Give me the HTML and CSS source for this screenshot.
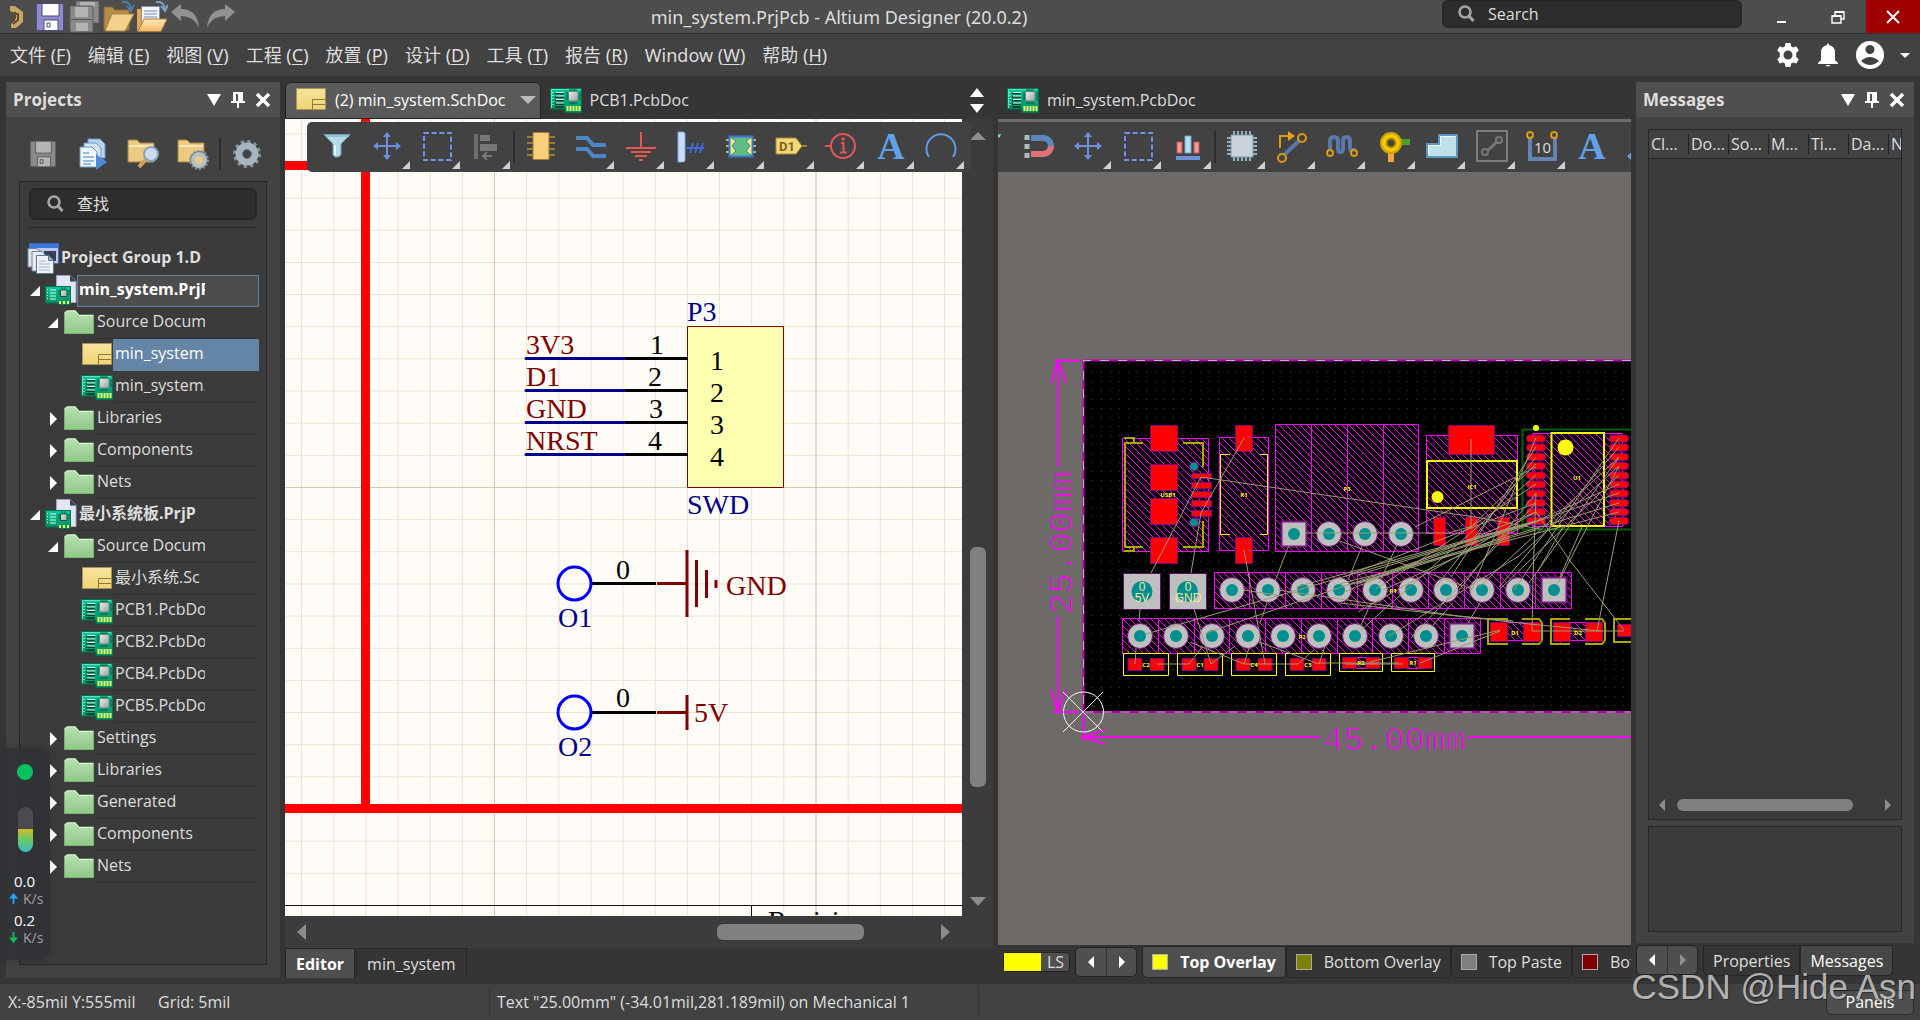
FILE: index.html
```html
<!DOCTYPE html>
<html lang="zh-CN">
<head>
  <meta charset="UTF-8">
  <meta name="viewport" content="width=device-width, initial-scale=1.0">
  <title>min_system.PrjPcb - Altium Designer (20.0.2)</title>
  <link rel="stylesheet" href="styles.css">
</head>
<body>
  <!-- shared icons -->
  <svg class="sprite" aria-hidden="true">
    <defs>
      <linearGradient id="gFolder" x1="0" y1="0" x2="0" y2="1"><stop offset="0" stop-color="#b9e0b4"/><stop offset="1" stop-color="#8fcb86"/></linearGradient>
      <linearGradient id="gSheet" x1="0" y1="0" x2="0" y2="1"><stop offset="0" stop-color="#f6e3a0"/><stop offset="1" stop-color="#f0d572"/></linearGradient>
      <linearGradient id="gBoard" x1="0" y1="0" x2="0" y2="1"><stop offset="0" stop-color="#00c99b"/><stop offset="1" stop-color="#008a5c"/></linearGradient>
      <linearGradient id="gChip" x1="0" y1="0" x2="1" y2="1"><stop offset="0" stop-color="#eee"/><stop offset="1" stop-color="#9aa39f"/></linearGradient>
      <linearGradient id="gOpen" x1="0" y1="0" x2="0" y2="1"><stop offset="0" stop-color="#ffe9bd"/><stop offset="1" stop-color="#efb764"/></linearGradient>

      <symbol id="folder" viewBox="0 0 32 32"><path d="M1.500 26.500V5l3-1.500h8L16 8h14.500v18.500z" fill="url(#gFolder)" stroke="#7fb078"/><path d="M2 6l3-2h7l4 4.500h14" fill="none" stroke="#e0f5dc"/></symbol>
      <symbol id="sheet" viewBox="0 0 32 32"><path d="M1.500 4.500h29v21h-29z" fill="url(#gSheet)" stroke="#a8915a"/><path d="M30 15.500H17.500V25M17.500 20.500H30" fill="none" stroke="#8d7845"/></symbol>
      <symbol id="board" viewBox="0 0 32 32">
        <path d="M.5 4.500h31v24H15v-3.500H.5z" fill="url(#gBoard)" stroke="#04724f"/>
        <path d="M1.500 24V5.500H30" fill="none" stroke="#5ee3bd"/>
        <path d="M5 9.500h9M5 13h9M5 16.500h9M5 20h9M5 23h9" stroke="#06482f" stroke-width="2"/>
        <path d="M6 8.500h8M6 12h8M6 15.500h8M6 19h8" stroke="#e6fff6"/>
        <path d="M3 8v13" stroke="#fff" stroke-dasharray="1 2"/>
        <path d="M20 5v2M22 5v2M24 5v2M26 5v2M20 18v2M22 18v2M24 18v2M26 18v2M16 9h2M16 11h2M16 13h2M16 15h2M29 9h2M29 11h2M29 13h2M29 15h2" stroke="#075639"/>
        <path d="M18.500 7.500h9.500v9.500h-9.500z" fill="url(#gChip)" stroke="#5d8878"/>
        <path d="M17.500 22v5M20.500 22v5M23.500 22v5M26.500 22v5M29.500 22v5" stroke="#e6ff6a" stroke-width="2"/>
      </symbol>
      <symbol id="project" viewBox="0 0 32 32">
        <path d="M11.500.5H25l6 6v21H11.500z" fill="#e3e6f2" stroke="#9fa6c4"/><path d="M25 .5l6 6h-6z" fill="#333a55"/>
        <path d="M.5 11.500h25v18H14V28H.5z" fill="url(#gBoard)" stroke="#04724f"/>
        <path d="M5 15h6M5 18h6M5 21h6M5 24h6" stroke="#e6fff6"/><path d="M2.500 14v11" stroke="#fff" stroke-dasharray="1 2"/>
        <path d="M15.500 15h6.500v6.500h-6.500z" fill="url(#gChip)" stroke="#075639"/><path d="M13 16h2M13 19h2M23 16h2M23 19h2M17 12v2M20 12v2" stroke="#075639"/>
        <path d="M15 26v3M19 26v3M23 26v3" stroke="#e6ff6a" stroke-width="2"/>
      </symbol>
      <symbol id="group" viewBox="0 0 32 32">
        <path d="M2.500.5h29v20h-29z" fill="#b9c9ea" stroke="#3b69c4"/><path d="M3 1h28v4H3z" fill="#3f76dc"/><path d="M17 8h12v10H17z" fill="#364159"/>
        <path d="M1 5.500h9l3 3V24H1z" fill="#dfe5ee" stroke="#76829b"/><path d="M5 8.500h10l3 3V28H5z" fill="#e7ecf3" stroke="#76829b"/>
        <path d="M9.500 12.500h12l5 5v13h-17z" fill="#eef2f8" stroke="#61759a"/><path d="M21.500 12.500v5h5" fill="#9fb2cf" stroke="#61759a"/><path d="M12 18h7M12 21h11M12 24h11M12 27h11" stroke="#a9b5c9"/>
      </symbol>
      <symbol id="save" viewBox="0 0 32 32"><path class="disk" d="M2.500 2.500h27v27h-27z"/><path class="disk-paper" d="M8 3h17v12H8zM10 19h14v10H10z"/><path class="disk-line" d="M8 3v12h17V3M10 29V19h14v10M13 22h3v4h-3z"/></symbol>
      <symbol id="lens" viewBox="0 0 20 20"><circle cx="9" cy="8" r="5.500" fill="none" stroke="#a5a5a5" stroke-width="2.600"/><path d="M13 12l4.500 5" stroke="#a5a5a5" stroke-width="3"/></symbol>
      <symbol id="pin" viewBox="0 0 14 18"><path d="M2 1h10v9h2v2H8v5H6v-5H0v-2h2z" fill="#fff"/><path d="M5 3h2v7H5z" fill="#4f4f4f"/></symbol>
      <symbol id="cross" viewBox="0 0 16 16"><path d="M2 2l12 12M14 2L2 14" stroke="#fff" stroke-width="3.400"/></symbol>
      <symbol id="gear" viewBox="0 0 32 32"><circle cx="16" cy="16" r="12.500" fill="none" stroke="#8797a1" stroke-width="3" stroke-dasharray="3.270 3.270"/><circle cx="16" cy="16" r="8" fill="none" stroke="#a7b5be" stroke-width="7"/><circle cx="16" cy="16" r="4.500" fill="none" stroke="#6b7a84"/></symbol>
      <symbol id="filter" viewBox="0 0 32 32"><path d="M3 4.500h26L20 14v11l-3 2h-3l-2-2V14z" fill="#b7dbe2" stroke="#6fa3b8"/><path d="M4 5h24v2H6z" fill="#90c5d8"/><path d="M14 15v10" stroke="#e8f8fb" stroke-width="2"/></symbol>
      <symbol id="move" viewBox="0 0 32 32"><path d="M16 4v24M4 16h24" stroke="#6e8ee0" stroke-width="2"/><path d="M16 2l4 5h-8zM16 30l4-5h-8zM2 16l5-4v8zM30 16l-5-4v8z" fill="#6e8ee0"/></symbol>
      <symbol id="marquee" viewBox="0 0 32 32"><path d="M3 3h27v27H3z" fill="none" stroke="#6e92e6" stroke-width="2" stroke-dasharray="5 2.700"/></symbol>
      <symbol id="letterA" viewBox="0 0 32 32"><text x="16" y="29" text-anchor="middle" class="big-a">A</text></symbol>
      <symbol id="pad" viewBox="-14 -14 28 28"><circle r="12.500" fill="#bfbfbf" stroke="#7a1481"/><circle r="6" fill="#008f8f"/></symbol>
      <symbol id="padSq" viewBox="-14 -14 28 28"><path d="M-12.500-12.500h25v25h-25z" fill="#bfbfbf" stroke="#7a1481" stroke-width="2"/><circle r="6" fill="#008f8f"/></symbol>
    </defs>
  </svg>

  <header class="titlebar">
    <div class="quick">
      <svg class="logo" viewBox="0 0 18 26"><path d="M2 2h5l8 6v10l-7 6H3v-4l4-3V9L2 7z" fill="#c9a663"/><path d="M2 12l5-3v5l-4 3M7 10h3v6l-5 4" fill="none" stroke="#5d4d33" stroke-width="2"/></svg>
      <button class="ico disk-blue" aria-label="Save"><svg><use href="#save"/></svg></button>
      <button class="ico disk-off" aria-label="Save all"><svg viewBox="0 0 32 32"><path class="disk" d="M8 0h23v22H8z"/><path class="disk-paper" d="M12 1h15v5H12z"/><path class="disk" d="M2 5h23v26H2z"/><path class="disk-paper" d="M7 6h13v10H7zM8 22h12v8H8z"/><path d="M3 18.500h21" stroke="#555"/></svg></button>
      <button class="ico" aria-label="Open"><svg viewBox="0 0 32 32"><path d="M2 29V6h8l3 3h14v20z" fill="#b48c48" stroke="#8d6c35"/><path d="M10 13h22l-9 17H3z" fill="#f2d28c" stroke="#a98342"/><path d="M20 1q8-1 9 7m-4-3l4 5 3-6" fill="none" stroke="#4e7fa9" stroke-width="2"/></svg></button>
      <button class="ico" aria-label="Open project"><svg viewBox="0 0 32 32"><path d="M1 30V8h8v22z" fill="#e7a44b"/><path d="M5.500 5.500h18v16h-18z" fill="#f4f6ff" stroke="#8b8fae"/><path d="M8 10h13M8 13h13M8 16h13" stroke="#6f87b6"/><path d="M8 18h23l-6 12.500H2z" fill="url(#gOpen)" stroke="#b07c34"/><path d="M20 1q8-1 9 7m-4-3l4 5 3-6" fill="none" stroke="#7ba3c0" stroke-width="2"/></svg></button>
      <button class="ico" aria-label="Undo"><svg viewBox="0 0 32 32"><path d="M1 11L11 3v5q16 0 18 18-6-11-18-11v5z" fill="#929292"/></svg></button>
      <button class="ico" aria-label="Redo"><svg viewBox="0 0 32 32"><path d="M31 11L21 3v5Q5 8 3 26q6-11 18-11v5z" fill="#929292"/></svg></button>
    </div>
    <div class="app-title">min_system.PrjPcb - Altium Designer (20.0.2)</div>
    <label class="field top-search"><svg><use href="#lens"/></svg><input type="text" placeholder="Search" aria-label="Search"></label>
    <div class="window-buttons">
      <button aria-label="Minimize"><svg viewBox="0 0 14 14"><path d="M2 12h9" stroke="#fff" stroke-width="2"/></svg></button>
      <button aria-label="Restore"><svg viewBox="0 0 14 14"><path d="M1 6h9v7H1zM4 6V2h9v7h-3" fill="none" stroke="#fff" stroke-width="1.400"/><path d="M4 2h9M1 6h9" stroke="#fff" stroke-width="2"/></svg></button>
      <button class="close" aria-label="Close"><svg viewBox="0 0 14 14"><path d="M1 1l12 12M13 1L1 13" stroke="#fff" stroke-width="2"/></svg></button>
    </div>
  </header>

  <nav class="menubar">
    <a href="#">文件 (<u>F</u>)</a>
    <a href="#">编辑 (<u>E</u>)</a>
    <a href="#">视图 (<u>V</u>)</a>
    <a href="#">工程 (<u>C</u>)</a>
    <a href="#">放置 (<u>P</u>)</a>
    <a href="#">设计 (<u>D</u>)</a>
    <a href="#">工具 (<u>T</u>)</a>
    <a href="#">报告 (<u>R</u>)</a>
    <a href="#">Window (<u>W</u>)</a>
    <a href="#">帮助 (<u>H</u>)</a>
    <div class="account">
      <button aria-label="Settings"><svg class="s24" viewBox="0 0 24 24"><path fill="#fff" fill-rule="evenodd" d="M9.500 0h5l.6 3.300 2 1.100 3.200-1.200 2.500 4.300L20.200 10v4l2.600 2.300-2.500 4.300-3.200-1.100-2 1.100-.6 3.400h-5l-.6-3.400-2-1.100-3.200 1.100-2.500-4.300L3.800 14v-4L1.200 7.500l2.500-4.300 3.200 1.200 2-1.100zM12 7.500a4.500 4.500 0 100 9 4.500 4.500 0 000-9z"/></svg></button>
      <button aria-label="Notifications"><svg class="s24" viewBox="0 0 24 24"><path fill="#fff" d="M12 0l1.500 2.200q5.500 1.500 5.500 7V17l3 3v1H2v-1l3-3V9.200q0-5.500 5.500-7zM9.500 22h5q-2.500 3-5 0z"/></svg></button>
      <button aria-label="Account"><svg class="s28" viewBox="0 0 28 28"><circle cx="14" cy="14" r="14" fill="#fff"/><circle cx="14" cy="8.500" r="4.500" fill="#424242"/><path d="M5 20q9-8 18 0-9 8-18 0z" fill="#424242"/></svg></button>
      <span class="tri down small"></span>
    </div>
  </nav>

  <main class="workspace">
    <section class="panel projects">
      <div class="panel-head"><h2>Projects</h2>
        <button aria-label="Panel menu"><span class="tri down"></span></button>
        <button aria-label="Pin"><svg class="pin"><use href="#pin"/></svg></button>
        <button aria-label="Close panel"><svg class="x"><use href="#cross"/></svg></button>
      </div>
      <div class="panel-tools">
        <button class="disk-off" aria-label="Save"><svg><use href="#save"/></svg></button>
        <button aria-label="Compile"><svg viewBox="0 0 32 32"><path d="M11 1h12l5 5v14H11z" fill="#b9d3ee" stroke="#6b97c4"/><path d="M7 5h12l5 5v14H7z" fill="#d7e6f6" stroke="#6b97c4"/><path d="M3 9h12l5 5v15H3z" fill="#eef6ff" stroke="#6b97c4"/><path d="M6 15h6M6 19h11M6 23h11M6 26h8" stroke="#7fa8d2" stroke-width="1.500"/><path d="M19 16l11 8-11 8z" fill="#4b8ad6"/></svg></button>
        <button aria-label="Find in project"><svg viewBox="0 0 32 32"><path d="M1 24V2h9l3 3h14v19z" fill="#ecca82" stroke="#a98342"/><path d="M2 8h24" stroke="#fbe9bd" stroke-width="2"/><path d="M19 21l-7 8" stroke="#d0a45c" stroke-width="4"/><circle cx="24" cy="16" r="7" fill="#cddcec" stroke="#8ba3b8" stroke-width="2"/></svg></button>
        <button aria-label="Project options"><svg viewBox="0 0 32 32"><path d="M1 24V2h9l3 3h14v19z" fill="#ecca82" stroke="#a98342"/><path d="M2 8h24" stroke="#fbe9bd" stroke-width="2"/><circle cx="22" cy="22" r="9" fill="#5f6b70" stroke="#879398" stroke-width="2" stroke-dasharray="2 2"/><circle cx="22" cy="22" r="6" fill="#ecca82" stroke="#b4c0c4" stroke-width="4"/></svg></button>
        <span class="sep"></span>
        <button aria-label="Settings"><svg><use href="#gear"/></svg></button>
      </div>
      <div class="tree-box">
        <label class="field"><svg><use href="#lens"/></svg><input type="text" placeholder="查找" aria-label="查找"></label>
        <div class="tree">
          <div class="row l0"><svg><use href="#group"/></svg><a href="#"><b>Project Group 1.D</b></a></div>
          <div class="row l1 current"><i class="open"></i><svg><use href="#project"/></svg><a href="#"><b>min_system.PrjPcb</b></a></div>
          <div class="row l2"><i class="open"></i><svg><use href="#folder"/></svg><a href="#"><span>Source Documents</span></a></div>
          <div class="row l3 selected"><i></i><svg><use href="#sheet"/></svg><a href="#"><span>min_system.</span></a></div>
          <div class="row l3"><i></i><svg><use href="#board"/></svg><a href="#"><span>min_system.</span></a></div>
          <div class="row l2"><i class="shut"></i><svg><use href="#folder"/></svg><a href="#"><span>Libraries</span></a></div>
          <div class="row l2"><i class="shut"></i><svg><use href="#folder"/></svg><a href="#"><span>Components</span></a></div>
          <div class="row l2"><i class="shut"></i><svg><use href="#folder"/></svg><a href="#"><span>Nets</span></a></div>
          <div class="row l1"><i class="open"></i><svg><use href="#project"/></svg><a href="#"><b>最小系统板.PrjP</b></a></div>
          <div class="row l2"><i class="open"></i><svg><use href="#folder"/></svg><a href="#"><span>Source Documents</span></a></div>
          <div class="row l3"><i></i><svg><use href="#sheet"/></svg><a href="#"><span>最小系统.Sc</span></a></div>
          <div class="row l3"><i></i><svg><use href="#board"/></svg><a href="#"><span>PCB1.PcbDoc</span></a></div>
          <div class="row l3"><i></i><svg><use href="#board"/></svg><a href="#"><span>PCB2.PcbDoc</span></a></div>
          <div class="row l3"><i></i><svg><use href="#board"/></svg><a href="#"><span>PCB4.PcbDoc</span></a></div>
          <div class="row l3"><i></i><svg><use href="#board"/></svg><a href="#"><span>PCB5.PcbDoc</span></a></div>
          <div class="row l2"><i class="shut"></i><svg><use href="#folder"/></svg><a href="#"><span>Settings</span></a></div>
          <div class="row l2"><i class="shut"></i><svg><use href="#folder"/></svg><a href="#"><span>Libraries</span></a></div>
          <div class="row l2"><i class="shut"></i><svg><use href="#folder"/></svg><a href="#"><span>Generated</span></a></div>
          <div class="row l2"><i class="shut"></i><svg><use href="#folder"/></svg><a href="#"><span>Components</span></a></div>
          <div class="row l2"><i class="shut"></i><svg><use href="#folder"/></svg><a href="#"><span>Nets</span></a></div>
        </div>
      </div>
    </section>

    <section class="editor">
      <div class="doc-tabs">
        <a href="#" class="doc-tab active"><svg><use href="#sheet"/></svg>(2) min_system.SchDoc<span class="tri down grey"></span></a>
        <a href="#" class="doc-tab"><svg><use href="#board"/></svg>PCB1.PcbDoc</a>
        <div class="tab-scroll"><span class="tri up"></span><span class="tri down"></span></div>
      </div>
      <div class="sheet-area">
        <svg class="sheet" viewBox="285 119 677 797" preserveAspectRatio="xMinYMin slice">
          <defs>
            <pattern id="grid" x="494" y="487" width="32.150" height="32.150" patternUnits="userSpaceOnUse"><path d="M.5 0v33M0 .5h33" stroke="#e8e3d0" fill="none"/></pattern>
            <pattern id="gridBig" x="494" y="487" width="321.500" height="321.500" patternUnits="userSpaceOnUse"><path d="M.5 0v322M0 .5h322" stroke="#cfcab4" fill="none"/></pattern>
          </defs>
          <path d="M285 119h677v797H285z" fill="#fffcf7"/>
          <path d="M285 119h677v797H285z" fill="url(#grid)"/>
          <path d="M285 119h677v797H285z" fill="url(#gridBig)"/>
          <path d="M285 165.500h81M365.500 119v694M285 808.500h677" stroke="#f00" stroke-width="9"/>
          <path d="M285 905.500h677M751.500 905v11" stroke="#111"/>
          <text x="768" y="930">Revision</text>
          <path d="M687.500 326.500h96v161h-96z" fill="#ffffb0" stroke="#800000"/>
          <path d="M526 358.500h98M526 390.500h98M526 422.500h98M526 454.500h98" stroke="#00008c" stroke-width="3" stroke-linecap="round"/>
          <path d="M625 358.500h63M625 390.500h63M625 422.500h63M625 454.500h63M592 583.500h64M592 712.500h64" stroke="#000" stroke-width="3"/>
          <g class="maroon"><text x="526" y="354">3V3</text><text x="526" y="386">D1</text><text x="526" y="418">GND</text><text x="526" y="450">NRST</text><text x="726" y="595">GND</text><text x="694" y="722">5V</text></g>
          <g><text x="650" y="354">1</text><text x="648" y="386">2</text><text x="649" y="418">3</text><text x="648" y="450">4</text>
            <text x="710" y="370">1</text><text x="710" y="402">2</text><text x="710" y="434">3</text><text x="710" y="466">4</text>
            <text x="616" y="579">0</text><text x="616" y="707">0</text></g>
          <g class="navy"><text x="687" y="321">P3</text><text x="687" y="514">SWD</text><text x="558" y="627">O1</text><text x="558" y="756">O2</text></g>
          <g fill="none" stroke="#00f" stroke-width="3"><circle cx="574.500" cy="583.500" r="16.500"/><circle cx="574.500" cy="712.500" r="16.500"/></g>
          <path d="M657 583.500h30M657 712.500h30M687 550v67M696.500 560v47M706.500 570v28M716 580v8M687 695v35" stroke="#800000" stroke-width="3"/>
        </svg>
        <div class="toolbar sheet-tools">
          <button class="plain" aria-label="Filter"><svg><use href="#filter"/></svg></button>
          <button aria-label="Move"><svg><use href="#move"/></svg></button>
          <button aria-label="Select"><svg><use href="#marquee"/></svg></button>
          <button aria-label="Align"><svg viewBox="0 0 32 32"><path d="M5 4v25" stroke="#6d6d6d" stroke-width="4"/><path d="M9 5h10v6H9zM9 14h17v7H9z" fill="#777"/><path d="M21 26h-9m4-4l-4 4 4 4" fill="none" stroke="#777" stroke-width="2"/></svg></button>
          <span class="sep"></span>
          <button class="plain" aria-label="Part"><svg viewBox="0 0 32 32"><path d="M2 7h28M2 13h28M2 19h28M2 25h28" stroke="#9a7b3c" stroke-width="2"/><path d="M8 2.500h16v27H8z" fill="#f7d07d" stroke="#a17b33"/></svg></button>
          <button aria-label="Wire"><svg viewBox="0 0 32 32"><path d="M1 8h11l6 7h13M1 19h11l6 7h13" fill="none" stroke="#4c86c6" stroke-width="4"/></svg></button>
          <button aria-label="Ground"><svg viewBox="0 0 32 32"><path d="M16 2v15M1 18h30M6 22h20M10 26h12M14 30h4" stroke="#e2574e" stroke-width="2"/></svg></button>
          <button aria-label="Bus"><svg viewBox="0 0 32 32"><path d="M3 2h5q2 0 2 2v26q0 2-2 2H3z" fill="#c9defa" stroke="#7fa6e0"/><path d="M10 18h19M15 23l3-10M20 23l3-10M25 23l3-10" stroke="#4468d0" stroke-width="2"/></svg></button>
          <button aria-label="Sheet symbol"><svg viewBox="0 0 32 32"><path d="M1 10h4M1 16h4M1 22h4M27 10h4M27 16h4M27 22h4" stroke="#a5c76d" stroke-width="2"/><path d="M4.500 6.500h23v20h-23z" fill="#5fbf80" stroke="#3e77d0" stroke-width="2"/><path d="M5 7l6 4-4 5 4 5-6 5zM27 7l-6 4 4 5-4 5 6 5z" fill="#f5ef7c" stroke="#3e77d0"/></svg></button>
          <button aria-label="Port"><svg viewBox="0 0 32 32"><path d="M1 8h20l6 8-6 8H1z" fill="#f5d875" stroke="#a48638"/><path d="M27 16h5" stroke="#a48638" stroke-width="2"/><text class="port-text" x="4" y="21">D1</text></svg></button>
          <button aria-label="Directive"><svg viewBox="0 0 32 32"><circle cx="18" cy="16" r="12" fill="none" stroke="#e2575a" stroke-width="2"/><path d="M0 16h6" stroke="#e2575a" stroke-width="2"/><path d="M16 13h2.500v9M15 22.500h7" fill="none" stroke="#e2575a" stroke-width="2"/><circle cx="18" cy="9" r="1.800" fill="#e2575a"/></svg></button>
          <button aria-label="Text"><svg><use href="#letterA"/></svg></button>
          <button aria-label="Arc"><svg viewBox="0 0 32 32"><path d="M4 27A14.500 14.500 0 1128 27" fill="none" stroke="#5f9be6" stroke-width="2"/></svg></button>
        </div>
      </div>
      <div class="vscroll"><span class="tri up grey"></span><div class="thumb"></div><span class="tri down grey"></span></div>
      <div class="hscroll"><span class="tri left grey"></span><div class="thumb"></div><span class="tri right grey"></span></div>
      <div class="sheet-tabs"><button class="on">Editor</button><button>min_system</button></div>
    </section>

    <section class="pcb">
      <div class="doc-tabs"><a href="#" class="doc-tab"><svg><use href="#board"/></svg>min_system.PcbDoc</a></div>
      <div class="pcb-area">
        <div class="toolbar">
          <button class="plain cut" aria-label="Filter"><svg><use href="#filter"/></svg></button>
          <button class="plain" aria-label="Snap"><svg viewBox="0 0 32 32"><path d="M9 8h12a8 8 0 018 8" fill="none" stroke="#5b87bb" stroke-width="6"/><path d="M9 24h12a8 8 0 008-8" fill="none" stroke="#dd7377" stroke-width="6"/><path d="M5 5v24" stroke="#a9bdb9" stroke-width="5" stroke-dasharray="5 4"/></svg></button>
          <button aria-label="Move"><svg><use href="#move"/></svg></button>
          <button aria-label="Select"><svg><use href="#marquee"/></svg></button>
          <button aria-label="Align"><svg viewBox="0 0 32 32"><path d="M5 12h5v11H5zM22 12h5v11h-5z" fill="#f09a9a" stroke="#cf4f52"/><path d="M13 6h6v17h-6z" fill="#b8dff0" stroke="#6ea4c8"/><path d="M4 28h24" stroke="#6c93dc" stroke-width="4"/></svg></button>
          <span class="sep"></span>
          <button aria-label="Component"><svg viewBox="0 0 32 32"><path d="M8 1v30M12 1v30M16 1v30M20 1v30M24 1v30M1 8h30M1 12h30M1 16h30M1 20h30M1 24h30" stroke="#93aebd" stroke-width="2"/><path d="M5 5h22v22H5z" fill="#c9d1da" stroke="#7f9db0"/></svg></button>
          <button aria-label="Route"><svg viewBox="0 0 32 32"><path d="M8 25L25 9" stroke="#5b78ab" stroke-width="4"/><path d="M4 18V6h9" fill="none" stroke="#dd9b12" stroke-width="2"/><path d="M12 1l7 5-7 5z" fill="#e6a21a"/><g fill="#424242" stroke="#dd9b12" stroke-width="2"><circle cx="6" cy="28" r="4"/><circle cx="26" cy="8" r="4"/></g></svg></button>
          <button aria-label="Tune"><svg viewBox="0 0 32 32"><path d="M4 21V11q0-4 4-4t4 4v8q0 3 2.500 3t2.500-3v-8q0-4 3.500-4t3.500 4v7q0 3 2 3t2-3" fill="none" stroke="#5b78ab" stroke-width="4"/><g fill="#424242" stroke="#dd9b12" stroke-width="2"><circle cx="4" cy="23" r="3"/><circle cx="28" cy="23" r="3"/></g></svg></button>
          <button aria-label="Pad"><svg viewBox="0 0 32 32"><path d="M15 20v12" stroke="#f0a33f" stroke-width="6"/><path d="M24 12h10" stroke="#4aa02c" stroke-width="6"/><circle cx="15" cy="13" r="10" fill="#f2c800" stroke="#cba400" stroke-width="2"/><circle cx="15" cy="13" r="4" fill="#424242" stroke="#947800" stroke-width="2"/></svg></button>
          <button aria-label="Polygon"><svg viewBox="0 0 32 32"><path d="M1 14h12V5h18v22H1z" fill="#c0e0ea" stroke="#5d95c0" stroke-width="2"/><path d="M2.500 25V15.500h12v-9H29" fill="none" stroke="#e9f8fb"/></svg></button>
          <button aria-label="Line"><svg viewBox="0 0 32 32"><path d="M1 1h30v30H1z" fill="none" stroke="#7d7d7d" stroke-width="2"/><path d="M10 22L23 10" stroke="#777" stroke-width="3"/><g fill="#424242" stroke="#777" stroke-width="2"><circle cx="9" cy="22" r="3"/><circle cx="23" cy="10" r="3"/></g></svg></button>
          <button aria-label="Dimension"><svg viewBox="0 0 32 32"><path d="M4 7v22h25V7" fill="none" stroke="#6483b3" stroke-width="4"/><g fill="#424242" stroke="#dd9b12" stroke-width="2"><circle cx="4" cy="5" r="3"/><circle cx="28" cy="5" r="3"/></g><text class="dim-icon" x="8" y="23">10</text></svg></button>
          <button class="plain" aria-label="String"><svg><use href="#letterA"/></svg></button>
          <button class="plain" aria-label="More"><svg viewBox="0 0 32 32"><path d="M3 28l8-8" stroke="#6aa3e8" stroke-width="5"/></svg></button>
        </div>
        <svg class="board" viewBox="998 172 633 773" preserveAspectRatio="xMinYMin slice">
          <defs>
            <pattern id="dots" x="1092" y="372" width="9" height="9" patternUnits="userSpaceOnUse"><path d="M0 0h1v1H0z" fill="#444"/></pattern>
            <pattern id="hatch" width="7" height="7" patternUnits="userSpaceOnUse"><path d="M-1-1l9 9" stroke="#f0f"/></pattern>
          </defs>
          <path d="M1083 360h548v352h-548z" fill="#000"/>
          <path d="M1083 360h548v352h-548z" fill="url(#dots)"/>
          <path d="M1631 360.500h-547.500v351.500H1631" fill="none" stroke="#b400b4" stroke-width="2"/>
          <path d="M1631 360.500h-547.500v351.500H1631" fill="none" stroke="#c0b0c0" stroke-dasharray="9 9"/>

          <!-- component bodies -->
          <g fill="url(#hatch)" stroke="#f0f">
            <path d="M1122.500 438.500h86v113h-86zM1219.500 437.500h49v113h-49zM1275.500 424.500h143v127h-143zM1311.500 424.500v127M1347.500 424.500v127M1383.500 424.500v127"/>
            <path d="M1426.500 435.500h91v98h-91zM1532.500 433.500h90v93h-90z"/>
            <path d="M1214.500 572.500h357v36h-357zM1249.500 572v36M1285.500 572v36M1321.500 572v36M1357.500 572v36M1392.500 572v36M1428.500 572v36M1464.500 572v36M1500.500 572v36M1535.500 572v36"/>
            <path d="M1122.500 618.500h358v35h-358zM1158.500 618v35M1194.500 618v35M1229.500 618v35M1265.500 618v35M1301.500 618v35M1337.500 618v35M1372.500 618v35M1408.500 618v35M1444.500 618v35"/>
            <path d="M1506.500 622.500h18v18h-18zM1569.500 622.500h18v18h-18zM1356.500 657.500h10v11h-10zM1408.500 657.500h10v11h-10z"/>
          </g>
          <path d="M1522.500 429.500h118v100h-118z" fill="none" stroke="#006400" stroke-width="2"/>
          <g fill="none" stroke="#a8a800" stroke-width="2">
            <path d="M1143 443h-18v104h18M1183 443h20v24M1203 521v26h-20M1124 438h10v5M1124 551h10v-5"/>
            <path d="M1508 619h-20v25h20M1522 619h17l3 4v17l-3 4h-17M1570 619h-19v25h19M1585 619h17l3 4v17l-3 4h-17M1631 619h-17v23h17"/>
          </g>
          <g fill="none" stroke="#ff0">
            <path d="M1230 454.500h-9.500v80h9.500M1260 454.500h7.500v80h-7.500"/>
            <path d="M1123.500 653.500h45v22h-45zM1177.500 653.500h45v22h-45zM1231.500 653.500h45v22h-45zM1285.500 653.500h45v22h-45zM1339.500 653.500h43v18h-43zM1391.500 653.500h43v18h-43z"/>
            <path d="M1427 461h90v47h-90zM1551.500 433h52.500v93h-52.500z" stroke-width="2"/>
          </g>

          <!-- smd pads -->
          <g fill="#f00" stroke="#800080">
            <path d="M1150.500 425.500h27v26h-27zM1150.500 464.500h27v26h-27zM1150.500 498.500h27v26h-27zM1150.500 537.500h27v26h-27z"/>
            <path d="M1191.500 473.500h20v5h-20zM1191.500 482.500h20v6h-20zM1191.500 491.500h20v6h-20zM1191.500 500.500h20v6h-20zM1191.500 510.500h20v6h-20z"/>
            <path d="M1235.500 425.500h17v26h-17zM1235.500 537.500h17v26h-17zM1448.500 425.500h46v29h-46z"/>
            <path d="M1433.500 517.500h12v28h-12zM1465.500 517.500h12v28h-12zM1497.500 517.500h12v28h-12z"/>
            <path d="M1128 658.500h14v12h-14zM1150 658.500h14v12h-14zM1182 658.500h14v12h-14zM1204 658.500h14v12h-14zM1236 658.500h14v12h-14zM1258 658.500h14v12h-14zM1290 658.500h14v12h-14zM1312 658.500h14v12h-14z"/>
            <path d="M1342.500 657.500h14v11h-14zM1366 657.500h14v11h-14zM1394.500 657.500h14v11h-14zM1418 657.500h14v11h-14z"/>
            <path d="M1490.500 622.500h17v19h-17zM1523.500 622.500h17v19h-17zM1553.500 622.500h17v19h-17zM1585.500 622.500h17v19h-17zM1617.500 624.500h14v12h-14z"/>
          </g>
          <path d="M1530 438.500h12M1530 447.500h12M1530 457h12M1530 466h12M1530 475.500h12M1530 484.500h12M1530 493.500h12M1530 503h12M1530 512h12M1530 521h12M1613 438.500h12M1613 447.500h12M1613 457h12M1613 466h12M1613 475.500h12M1613 484.500h12M1613 493.500h12M1613 503h12M1613 512h12M1613 521h12" stroke="#800080" stroke-width="8" stroke-linecap="round"/>
          <path d="M1530 438.500h12M1530 447.500h12M1530 457h12M1530 466h12M1530 475.500h12M1530 484.500h12M1530 493.500h12M1530 503h12M1530 512h12M1530 521h12M1613 438.500h12M1613 447.500h12M1613 457h12M1613 466h12M1613 475.500h12M1613 484.500h12M1613 493.500h12M1613 503h12M1613 512h12M1613 521h12" stroke="#f00" stroke-width="6" stroke-linecap="round"/>
          <g fill="#ff0"><circle cx="1437.500" cy="497" r="6"/><circle cx="1565.500" cy="447.500" r="8"/><circle cx="1536" cy="428" r="3"/></g>
          <g fill="#008f8f" stroke="#800080"><circle cx="1194" cy="466.500" r="4.500"/><circle cx="1194" cy="522.500" r="4.500"/></g>

          <!-- through-hole pads -->
          <g>
            <use href="#padSq" x="1280" y="520" width="28" height="28"/><use href="#pad" x="1315" y="520" width="28" height="28"/><use href="#pad" x="1351" y="520" width="28" height="28"/><use href="#pad" x="1387" y="520" width="28" height="28"/>
            <use href="#pad" x="1218" y="576" width="28" height="28"/><use href="#pad" x="1254" y="576" width="28" height="28"/><use href="#pad" x="1289" y="576" width="28" height="28"/><use href="#pad" x="1325" y="576" width="28" height="28"/><use href="#pad" x="1361" y="576" width="28" height="28"/><use href="#pad" x="1397" y="576" width="28" height="28"/><use href="#pad" x="1432" y="576" width="28" height="28"/><use href="#pad" x="1468" y="576" width="28" height="28"/><use href="#pad" x="1504" y="576" width="28" height="28"/><use href="#padSq" x="1540" y="576" width="28" height="28"/>
            <use href="#pad" x="1126" y="622" width="28" height="28"/><use href="#pad" x="1162" y="622" width="28" height="28"/><use href="#pad" x="1198" y="622" width="28" height="28"/><use href="#pad" x="1234" y="622" width="28" height="28"/><use href="#pad" x="1269" y="622" width="28" height="28"/><use href="#pad" x="1305" y="622" width="28" height="28"/><use href="#pad" x="1341" y="622" width="28" height="28"/><use href="#pad" x="1377" y="622" width="28" height="28"/><use href="#pad" x="1412" y="622" width="28" height="28"/><use href="#padSq" x="1448" y="622" width="28" height="28"/>
            <path d="M1123.500 573.500h37v36h-37zM1169.500 573.500h37v36h-37z" fill="#bfbfbf" stroke="#5d1063"/>
            <circle cx="1142" cy="591.500" r="10.500" fill="#008f8f"/><circle cx="1187.500" cy="591.500" r="10.500" fill="#008f8f"/>
          </g>

          <!-- ratsnest -->
          <g stroke="#9c9c74" fill="none">
            <path d="M1201 477L1151 573M1244 438L1201 513 1191 573M1201 477L1475 517 1540 529M1244 550L1265 664M1140 609l-1 13M1136 648l-1 16M1194 609l17 55M1157 664h32l14-18M1211 664l24-18M1190 642l54 22M1244 664l5-16M1244 664h54l16-14M1319 664l-60-22M1319 664l6-18M1319 663h80M1289 545l-14 36M1267 603l-7 20"/>
            <path d="M1305 533h130l14 0 23-7 64-62M1471 439v90M1415 527l121-60M1340 541l110 40 22 8M1362 546l-14 34M1397 545l-18 38M1243 590l40 6M1278 590l180 26 55 5M1340 603l180 20 80 8"/>
            <path d="M1536 438l-65 153M1536 447l-85 130M1536 457l-100 130M1536 475l-175 155M1536 484l-160 105M1536 512l-178 100M1536 521l-240 66M1536 503l-190 73M1536 521l-390 113M1536 521l-330 112M1536 512l-192 80M1536 503l-125 135M1536 493l-77 97M1536 521l-178 54M1536 530l-180 54"/>
            <path d="M1619 438l-105 152M1619 447l-120 140M1619 457l-140 130M1619 466l-100 90-130 80M1619 475l-118 113M1619 484l-236 106M1619 493l-260 90M1619 503l-270 82M1619 512l-280 72M1619 521l-22 110M1619 466l-61 117M1619 457l-90 126M1582 527l-22 50M1563 527l-25 44"/>
            <path d="M1536 493l-3 85-1 53h92M1536 512l35 50 53 68M1345 664h58M1420 663l80-32M1500 630l-130 32M1371 603l-10 22M1453 603l-20 22M1480 603l-12 20"/>
          </g>

          <g class="silk"><text x="1168" y="497">USB1</text><text x="1244" y="497">K1</text><text x="1347" y="491">P3</text><text x="1472" y="489">IC1</text><text x="1577" y="480">U1</text><text x="1393" y="593">P1</text><text x="1302" y="639">P2</text><text x="1146" y="667">C2</text><text x="1200" y="667">C1</text><text x="1254" y="667">C4</text><text x="1308" y="667">C5</text><text x="1361" y="665">R2</text><text x="1413" y="665">R1</text><text x="1515" y="635">D1</text><text x="1578" y="635">D2</text></g>
          <g class="net"><text x="1142" y="591">0</text><text x="1142" y="602">5V</text><text x="1188" y="591">0</text><text x="1188" y="602">GND</text></g>

          <!-- dimensions -->
          <text class="dim" transform="translate(1072 614) rotate(-90)">25.00mm</text>
          <text class="dim" x="1323" y="750">45.00mm</text>
          <g fill="none" stroke="#f0f" stroke-width="2">
            <path d="M1058 362v105M1058 616v95M1054 360.500h26M1054 712h26M1051 383l7-22 8 22M1051 690l7 22 8-22"/>
            <path d="M1083 737h237M1468 737h163M1083.500 714v27M1105 730l-22 7 22 7"/>
          </g>
          <g fill="none" stroke="#fff"><circle cx="1083.500" cy="712" r="20"/><path d="M1063 692l40 40M1103 692l-40 40"/></g>
        </svg>
      </div>
      <div class="layers">
        <button class="ls"><span class="ls-color"></span>LS</button>
        <div class="nav-pair"><button aria-label="Previous layer"><span class="tri left"></span></button><button aria-label="Next layer"><span class="tri right"></span></button></div>
        <div class="layer-tabs">
          <button class="on"><span class="chip yellow"></span>Top Overlay</button>
          <button><span class="chip olive"></span>Bottom Overlay</button>
          <button><span class="chip silver"></span>Top Paste</button>
          <button><span class="chip dark-red"></span>Bottom Paste</button>
        </div>
      </div>
    </section>

    <section class="side">
      <div class="panel messages">
        <div class="panel-head"><h2>Messages</h2>
          <button aria-label="Panel menu"><span class="tri down"></span></button>
          <button aria-label="Pin"><svg class="pin"><use href="#pin"/></svg></button>
          <button aria-label="Close panel"><svg class="x"><use href="#cross"/></svg></button>
        </div>
        <div class="msg-list">
          <table>
            <thead><tr><th>Cl...</th><th>Do...</th><th>So...</th><th>M...</th><th>Ti...</th><th>Da...</th><th>No...</th></tr></thead>
          </table>
          <div class="msg-scroll"><span class="tri left grey"></span><div class="thumb"></div><span class="tri right grey"></span></div>
        </div>
        <div class="msg-detail"></div>
      </div>
      <div class="side-tabs">
        <div class="nav-pair"><button aria-label="Previous panel"><span class="tri left"></span></button><button aria-label="Next panel"><span class="tri right grey"></span></button></div>
        <button>Properties</button><button class="on">Messages</button>
      </div>
    </section>
  </main>

  <footer class="status">
    <span class="coords">X:-85mil Y:555mil</span>
    <span class="snap">Grid: 5mil</span>
    <span class="hint">Text "25.00mm" (-34.01mil,281.189mil) on Mechanical 1</span>
    <button class="panels">Panels</button>
    <span class="watermark">CSDN @Hide Asn</span>
  </footer>

  <aside class="monitor">
    <span class="dot"></span>
    <span class="level"></span>
    <div class="rate"><b>0.0</b><span><svg viewBox="0 0 10 12"><path d="M5 0l5 6H6v6H4V6H0z" fill="#1ba8ff"/></svg>K/s</span></div>
    <div class="rate"><b>0.2</b><span><svg viewBox="0 0 10 12"><path d="M5 12L0 6h4V0h2v6h4z" fill="#07c160"/></svg>K/s</span></div>
  </aside>
</body>
</html>
```

FILE: styles.css
```css
* { margin: 0; padding: 0; box-sizing: border-box; }

body {
  position: relative;
  display: flex;
  flex-direction: column;
  height: 100vh;
  overflow: hidden;
  background: #353535;
  color: #dedede;
  font-family: "Open Sans", "Noto Sans CJK SC", sans-serif;
  font-size: 16px;
  line-height: 22px;
}

a { color: inherit; text-decoration: none; }

button {
  border: none;
  background: none;
  color: inherit;
  font: inherit;
  white-space: nowrap;
}

.sprite { position: absolute; width: 0; height: 0; }

/* small triangles */
.tri { display: block; width: 0; height: 0; flex: none; border: 6px solid transparent; color: #fff; }
.tri.grey { color: #8c8c8c; }
.tri.down { border-width: 12px 7px 0; border-top-color: currentColor; }
.tri.up { border-width: 0 7px 12px; border-bottom-color: currentColor; }
.tri.left { border-width: 6px 6px 6px 0; border-right-color: currentColor; }
.tri.right { border-width: 6px 0 6px 6px; border-left-color: currentColor; }
.tri.small { border-width: 5px 5px 0; }

/* title bar */
.titlebar {
  display: flex;
  align-items: center;
  height: 34px;
  flex: none;
  background: #4d4d4d;
  border-bottom: 1px solid #303030;
}

.quick { display: flex; align-items: center; gap: 2px; padding-left: 8px; }
.logo { width: 18px; height: 26px; margin-right: 6px; }
.ico, .ico svg { display: block; width: 32px; height: 32px; }

.disk-blue { --disk: #8f8bc9; --paper: #fff; --line: #4c4a86; }
.disk-off { --disk: #8a8a8a; --paper: #b4b4b4; --line: #5c5c5c; }
.disk { fill: var(--disk); stroke: var(--line); }
.disk-paper { fill: var(--paper); }
.disk-line { fill: none; stroke: var(--line); }

.app-title { flex: 1; text-align: center; font-family: "Noto Sans", sans-serif; font-size: 18px; }

.field {
  display: flex;
  align-items: center;
  background: #2d2d2d;
  border: 2px solid #262626;
  border-radius: 6px;
}

.field svg { width: 20px; height: 20px; flex: none; }

.field input {
  flex: 1;
  min-width: 0;
  border: none;
  outline: none;
  background: none;
  color: #dedede;
  font: inherit;
}

.field input::placeholder { color: #dedede; opacity: 1; }

.top-search { width: 300px; height: 28px; padding-left: 12px; gap: 12px; align-self: flex-start; }

.window-buttons { display: flex; align-self: stretch; margin-left: 12px; }
.window-buttons button { width: 56px; display: flex; align-items: center; justify-content: center; }
.window-buttons svg { width: 14px; height: 14px; }
.window-buttons .close { width: 54px; background: #9e0000; }

/* menu */
.menubar {
  display: flex;
  align-items: center;
  gap: 17px;
  height: 42px;
  flex: none;
  padding: 0 10px;
  background: #424242;
  font-family: "Noto Sans", "Noto Sans CJK SC", sans-serif;
  font-size: 18px;
}

.menubar u { text-underline-offset: 2px; }
.account { display: flex; align-items: center; gap: 16px; margin-left: auto; }
.account svg { display: block; }
.s24 { width: 24px; height: 24px; }
.s28 { width: 28px; height: 28px; }

/* workspace */
.workspace {
  display: grid;
  grid-template-columns: 274px minmax(0, 708fr) minmax(0, 633fr) 278px;
  column-gap: 5px;
  flex: 1;
  min-height: 0;
  padding: 6px;
}

.panel { display: flex; flex-direction: column; min-height: 0; background: #424242; }

.panel-head {
  display: flex;
  align-items: center;
  gap: 10px;
  height: 35px;
  flex: none;
  padding: 0 9px 0 7px;
  background: #4f4f4f;
}

.panel-head h2 { flex: 1; font-size: 17px; line-height: 22px; }
.panel-head svg { display: block; }
.pin { width: 14px; height: 18px; }
.x { width: 16px; height: 16px; }

.panel-tools { display: flex; align-items: center; height: 64px; flex: none; padding: 10px 0 0 12px; }
.panel-tools button { display: flex; justify-content: center; width: 50px; }
.panel-tools svg { width: 32px; height: 32px; }
.panel-tools .disk-off svg { width: 30px; height: 30px; }
.sep { width: 2px; height: 32px; flex: none; margin: 0 1px; background: #2c2c2c; }

.tree-box {
  flex: 1;
  min-height: 0;
  margin: 0 13px 13px;
  padding: 6px 9px;
  border: 1px solid #262626;
  background: #3b3b3b;
}

.tree-box .field { height: 32px; padding-left: 14px; gap: 12px; }

.tree {
  margin-top: 7px;
  padding-top: 15px;
  border-top: 1px solid #262626;
}

.row { display: flex; height: 32px; margin-left: -2px; }
.row svg { width: 32px; height: 32px; flex: none; }
.row i { width: 18px; flex: none; }
.row.l2 { padding-left: 18px; }
.row.l3 { padding-left: 36px; }

.row a {
  flex: 1;
  min-width: 0;
  margin-right: -2px;
  padding: 3px 54px 0 2px;
  border-bottom: 1px solid #323232;
}

.row a > * { display: block; overflow: hidden; white-space: nowrap; }
.row.l0 a { border-bottom: none; }
.row .open::before { content: ''; display: block; width: 0; margin: 11px 0 0 3px; border: 5px solid transparent; border-right-color: #fff; border-bottom-color: #fff; }
.row .shut::before { content: ''; display: block; width: 0; margin: 9px 0 0 5px; border: 7px solid transparent; border-left-color: #fff; border-right-width: 0; }
.row.current a { border: 1px solid #5f83a5; background: #4d4d4d; color: #fff; padding: 2px 53px 0 1px; }
.row.selected a { background: #6485a5; border-color: #6485a5; color: #fff; }

/* documents */
.editor {
  display: grid;
  grid-template-columns: minmax(0, 1fr) 31px;
  grid-template-rows: 37px minmax(0, 1fr) 32px 30px;
}

.doc-tabs { display: flex; grid-column: 1 / -1; height: 37px; }

.doc-tab {
  display: flex;
  align-items: center;
  gap: 8px;
  padding: 0 10px 2px 9px;
}

.doc-tab svg { width: 32px; height: 32px; }

.doc-tab.active {
  padding-right: 4px;
  border: 1px solid #222;
  border-radius: 6px 6px 0 0;
  background: #5a5a5a;
  color: #fff;
}

.doc-tab .tri { margin-left: 6px; border-width: 8px 8px 0; color: #bbb; }
.tab-scroll { display: flex; flex-direction: column; justify-content: center; gap: 7px; margin-left: auto; padding-right: 9px; }
.tab-scroll .tri.down { border-top-width: 9px; }
.tab-scroll .tri.up { border-bottom-width: 9px; }

.sheet-area { position: relative; }
.sheet { display: block; width: 100%; height: 100%; }
.sheet text { font-family: "Liberation Serif", serif; font-size: 28px; }
.maroon { fill: #800000; }
.navy { fill: #00008c; }

.toolbar { display: flex; align-items: center; height: 50px; background: #424242; }
.sheet-tools { position: absolute; top: 3px; left: 22px; right: -9px; padding-left: 5px; border-radius: 5px; }
.toolbar button { position: relative; width: 50px; height: 50px; flex: none; padding-top: 2px; }
.toolbar button svg { display: block; width: 32px; height: 32px; margin: 0 auto 4px; overflow: visible; }

.toolbar button:not(.plain)::after {
  content: '';
  position: absolute;
  right: 2px;
  bottom: 3px;
  border: 4px solid transparent;
  border-right-color: #d0d0d0;
  border-bottom-color: #d0d0d0;
}

.big-a { font-family: "Liberation Serif", serif; font-size: 38px; font-weight: bold; fill: #61a0ea; }
.port-text { font-family: Roboto, sans-serif; font-size: 13px; font-weight: bold; fill: #7a6226; }
.dim-icon { font-family: "Open Sans", sans-serif; font-size: 15px; fill: #ddd; }

.thumb { background: #808080; border-radius: 6px; }
.vscroll { display: flex; flex-direction: column; align-items: center; padding: 13px 0 10px; background: #3c3c3c; }
.vscroll .thumb { width: 16px; height: 31%; margin: auto 0 110px; }
.vscroll .tri.up { border-bottom-width: 8px; border-left-width: 8px; border-right-width: 8px; }
.vscroll .tri.down { border-top-width: 9px; border-left-width: 8px; border-right-width: 8px; }

.hscroll { display: flex; align-items: center; grid-column: 1 / -1; padding: 0 43px 0 12px; background: #3c3c3c; }
.hscroll .tri { border-top-width: 8px; border-bottom-width: 8px; }
.hscroll .tri.left { border-right-width: 9px; }
.hscroll .tri.right { border-left-width: 9px; }
.hscroll .thumb { width: 147px; height: 16px; margin: 0 77px 0 auto; }

.sheet-tabs { display: flex; gap: 1px; }
.sheet-tabs button { padding: 0 10px; border: 1px solid #262626; border-bottom: none; }
.sheet-tabs .on { background: #4f4f4f; color: #fff; font-weight: bold; }

/* pcb */
.pcb { display: flex; flex-direction: column; min-height: 0; }
.pcb-area { display: flex; flex-direction: column; flex: 1; min-height: 0; padding-top: 3px; background: #6e6a68; }
.pcb .toolbar { flex: none; overflow: hidden; }
.pcb .cut { margin-left: -35px; }
.board { display: block; width: 100%; flex: 1; min-height: 0; }
.silk { font-size: 6px; font-weight: bold; fill: #ff0; text-anchor: middle; }
.net { font-family: "Liberation Sans", sans-serif; font-size: 12px; fill: #ffe79a; text-anchor: middle; }
.dim { font-family: "Liberation Mono", monospace; font-size: 34px; fill: #f0f; stroke: #6e6a68; stroke-width: 1px; }

.layers { display: flex; align-items: center; gap: 5px; height: 33px; flex: none; padding-left: 5px; overflow: hidden; }
.ls { display: flex; height: 20px; line-height: 18px; border: 1px solid #222; border-radius: 4px; background: #4f4f4f; padding-right: 5px; gap: 6px; }
.ls-color { width: 37px; background: #ff0; }

.nav-pair { display: flex; height: 30px; flex: none; border: 1px solid #222; border-radius: 5px; background: #4f4f4f; }
.nav-pair button { display: flex; align-items: center; justify-content: center; width: 30px; }
.nav-pair button + button { border-left: 1px solid #333; }

.layer-tabs { display: flex; flex: 1; min-width: 0; overflow: hidden; }

.layer-tabs button {
  display: flex;
  align-items: center;
  gap: 12px;
  height: 32px;
  flex: none;
  padding: 0 9px;
  border: 1px solid #262626;
  border-radius: 0 0 5px 5px;
}

.layer-tabs .on { background: #4f4f4f; color: #fff; font-weight: bold; }
.chip { width: 16px; height: 16px; border: 1px solid #aaa; }
.yellow { background: #ff0; }
.olive { background: #808000; }
.silver { background: #808080; }
.dark-red { background: #800000; }

/* messages */
.side { display: flex; flex-direction: column; min-height: 0; }
.messages { flex: 1; }
.msg-list { display: flex; flex-direction: column; flex: 1; margin: 12px 12px 0; border: 1px solid #262626; background: #3b3b3b; overflow: hidden; }
.msg-list table { width: 280px; table-layout: fixed; border-collapse: collapse; background: #424242; }
.msg-list th { position: relative; height: 28px; padding-left: 2px; border-bottom: 1px solid #262626; font-weight: normal; text-align: left; white-space: nowrap; }
.msg-list th + th::before { content: ''; position: absolute; left: -1px; top: 4px; width: 1px; height: 20px; background: #222; }
.msg-scroll { display: flex; align-items: center; height: 12px; margin: auto 10px 8px; }
.msg-scroll .thumb { width: 176px; height: 12px; margin: 0 auto 0 12px; }
.msg-detail { height: 106px; flex: none; margin: 6px 12px 11px; border: 1px solid #262626; background: #3b3b3b; }

.side-tabs { display: flex; height: 35px; flex: none; padding: 2px 0; }
.side-tabs > button { height: 31px; padding: 0 9px; border: 1px solid #262626; border-radius: 0 0 5px 5px; }
.side-tabs .nav-pair { margin-right: 5px; }
.side-tabs .on { background: #474747; color: #fff; }

/* status */
.status {
  position: relative;
  display: flex;
  align-items: center;
  height: 36px;
  flex: none;
  padding: 0 6px 0 8px;
  background: #424242;
}

.coords { width: 150px; }
.snap { width: 331px; }
.hint { width: 490px; padding-left: 7px; border-left: 1px solid #353535; border-right: 1px solid #353535; line-height: 30px; white-space: nowrap; }
.panels { width: 88px; height: 25px; margin: 0 0 0 auto; border: 1px solid #2a2a2a; border-radius: 5px; background: #4f4f4f; color: #fff; }

.watermark {
  position: absolute;
  right: 4px;
  bottom: 14px;
  font-family: "Liberation Sans", sans-serif;
  font-size: 35px;
  line-height: 38px;
  color: rgba(215, 215, 215, 0.8);
  text-shadow: 1px 1px 1px rgba(0, 0, 0, 0.4);
  white-space: nowrap;
}

/* floating network monitor */
.monitor {
  position: absolute;
  left: 0;
  bottom: 60px;
  display: flex;
  flex-direction: column;
  align-items: center;
  width: 50px;
  height: 212px;
  padding-top: 16px;
  border-radius: 0 10px 10px 0;
  background: rgba(48, 49, 54, 0.85);
  box-shadow: 0 0 8px rgba(0, 0, 0, 0.15);
}

.dot { width: 16px; height: 16px; border-radius: 50%; background: #07c160; }
.level { width: 15px; height: 45px; margin: 27px 0 21px; border-radius: 8px; background: linear-gradient(#4b4b4f 48%, #d4b92a 49%, #6fc95b 70%, #38bdc4); }
.rate { width: 50px; height: 39px; padding-left: 9px; line-height: 17px; }
.rate b { display: block; padding-left: 5px; font-size: 15px; font-weight: normal; color: #fff; }
.rate span { display: flex; align-items: center; gap: 5px; font-size: 14px; color: #a0a0a4; }
.rate svg { width: 9px; height: 11px; }
```
